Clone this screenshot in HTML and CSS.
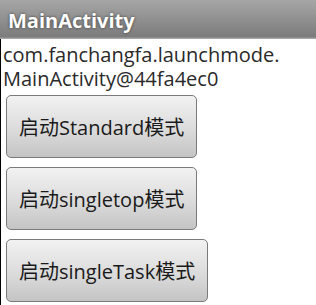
FILE: index.html
```html
<!DOCTYPE html>
<html lang="en">
<head>
    <meta charset="UTF-8">
    <title>MainActivity</title>
    <link rel="stylesheet" href="styles.css">
</head>
<body>
    <div class="title-bar">MainActivity</div>
    <div class="content">
        <p class="info">com.fanchangfa.launchmode.<br>MainActivity@44fa4ec0</p>
        <button class="mode-button">启动Standard模式</button>
        <button class="mode-button">启动singletop模式</button>
        <button class="mode-button">启动singleTask模式</button>
    </div>
</body>
</html>
```

FILE: styles.css
```css
body {
    margin: 0;
    padding: 0;
    width: 316px;
    height: 305px;
    overflow: hidden;
    background-color: #ffffff;
    font-family: "Open Sans", "Noto Sans CJK SC", sans-serif;
}

.title-bar {
    height: 39px;
    box-sizing: border-box;
    padding: 7px 0 0 8px;
    background: linear-gradient(to bottom, #a6a6a6, #7c7c7c 94%, #b0b0b0);
    color: #ffffff;
    font-size: 20px;
    font-weight: bold;
    text-shadow: 0 0 3px rgba(0, 0, 0, 0.6);
}

.content {
    border-left: 1px solid #000000;
    height: 266px;
    padding-left: 2px;
    display: flex;
    flex-direction: column;
    align-items: flex-start;
    gap: 9px;
}

.info {
    margin: 4px 0 -5px 0;
    font-size: 20px;
    line-height: 24px;
    color: #2a2a2a;
}

.mode-button {
    margin-left: 3px;
    height: 63px;
    padding: 0 12px;
    border: 1px solid #7a7a7a;
    border-radius: 5px;
    background: linear-gradient(to bottom, #f2f2f2, #d9d9d9 60%, #c4c4c4);
    font-family: "Open Sans", "Noto Sans CJK SC", sans-serif;
    font-size: 20px;
    color: #1a1a1a;
}
```
